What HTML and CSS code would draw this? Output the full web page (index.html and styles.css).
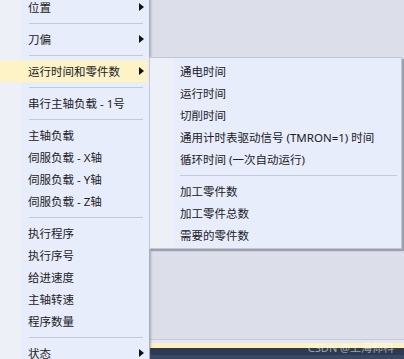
FILE: index.html
```html
<!DOCTYPE html>
<html lang="zh-CN">

<head>
  <meta charset="UTF-8" />
  <meta name="viewport" content="width=device-width, initial-scale=1.0" />
  <title>运行时间和零件数</title>
  <link rel="stylesheet" href="styles.css">
</head>

<body>
  <div class="screen">

    <!-- 主菜单 -->
    <div class="menu main-menu">
      <div class="item">位置<span class="arrow"></span></div>
      <div class="sep"></div>
      <div class="item">刀偏<span class="arrow"></span></div>
      <div class="sep"></div>
      <div class="item active">运行时间和零件数<span class="arrow"></span></div>
      <div class="sep"></div>
      <div class="item">串行主轴负载 - 1号</div>
      <div class="sep"></div>
      <div class="item">主轴负载</div>
      <div class="item">伺服负载 - X轴</div>
      <div class="item">伺服负载 - Y轴</div>
      <div class="item">伺服负载 - Z轴</div>
      <div class="sep"></div>
      <div class="item">执行程序</div>
      <div class="item">执行序号</div>
      <div class="item">给进速度</div>
      <div class="item">主轴转速</div>
      <div class="item">程序数量</div>
      <div class="sep"></div>
      <div class="item">状态<span class="arrow"></span></div>
    </div>

    <!-- 工作区 -->
    <div class="workspace">
      <div class="pane"></div>
      <div class="pane-edge"></div>
      <div class="tab-strip"></div>
      <div class="statusbar">
        <span class="watermark">CSDN @上海仰科</span>
      </div>
    </div>

    <!-- 子菜单 -->
    <div class="menu submenu">
      <div class="item">通电时间</div>
      <div class="item">运行时间</div>
      <div class="item">切削时间</div>
      <div class="item">通用计时表驱动信号 (TMRON=1) 时间</div>
      <div class="item">循环时间 (一次自动运行)</div>
      <div class="sep"></div>
      <div class="item">加工零件数</div>
      <div class="item">加工零件总数</div>
      <div class="item">需要的零件数</div>
    </div>

  </div>
</body>

</html>
```

FILE: styles.css
```css
html,
body {
  margin: 0;
  height: 100%;
  overflow: hidden;
}

body {
  font-family: "Noto Sans", "Noto Sans CJK SC", sans-serif;
  font-size: 11.5px;
  color: #202126;
  background: #dcdfea;
}

.screen {
  position: relative;
  display: flex;
  height: 359px;
}

.menu .item {
  display: flex;
  align-items: center;
  justify-content: space-between;
  height: 22px;
  white-space: nowrap;
}

.menu .sep {
  height: 1px;
  background: #c6cad5;
}

/* 主菜单 */
.main-menu {
  flex: none;
  width: 147px;
  margin-top: -4px;
  padding-right: 2px;
  border-right: 1px solid #a9aebb;
  background: linear-gradient(to right, #eef0f8 21px, #e8edfb 21px);
  box-shadow: 1px 0 2px rgba(70, 80, 100, 0.35);
  z-index: 1;
}

.main-menu .item {
  padding: 0 3px 0 28px;
}

.main-menu .item.active {
  background: #fdf3c6;
}

.main-menu .sep {
  margin: 5px 4px 4px 29px;
}

.arrow {
  flex: none;
  width: 0;
  height: 0;
  border-top: 4px solid transparent;
  border-bottom: 4px solid transparent;
  border-left: 5px solid #111;
}

/* 工作区 */
.workspace {
  flex: 1;
  display: flex;
  flex-direction: column;
}

.pane {
  flex: 1;
  background: #dcdfea;
}

.pane-edge {
  height: 4px;
  background: #e6e8ef;
  border-top: 1px solid #c9ccd6;
  box-sizing: border-box;
}

.tab-strip {
  height: 5px;
  background: #fdf1bf;
}

.statusbar {
  position: relative;
  height: 11px;
  background: linear-gradient(#2d3a55 7px, #3a4863 7px);
}

.watermark {
  position: absolute;
  right: 10px;
  top: -7px;
  font-size: 11px;
  line-height: 14px;
  color: rgba(255, 255, 255, 0.55);
}

/* 子菜单 */
.submenu {
  position: absolute;
  left: 149px;
  top: 57px;
  width: 251px;
  padding: 2px 0;
  border: 1px solid #c2c7d3;
  background: linear-gradient(to right, #eef0f8 24px, #e8edfc 24px);
  box-shadow: 2px 2px 1px rgba(90, 98, 118, 0.5);
  z-index: 2;
}

.submenu .item {
  padding-left: 30px;
}

.submenu .sep {
  margin: 5px 4px 4px 30px;
}
```
